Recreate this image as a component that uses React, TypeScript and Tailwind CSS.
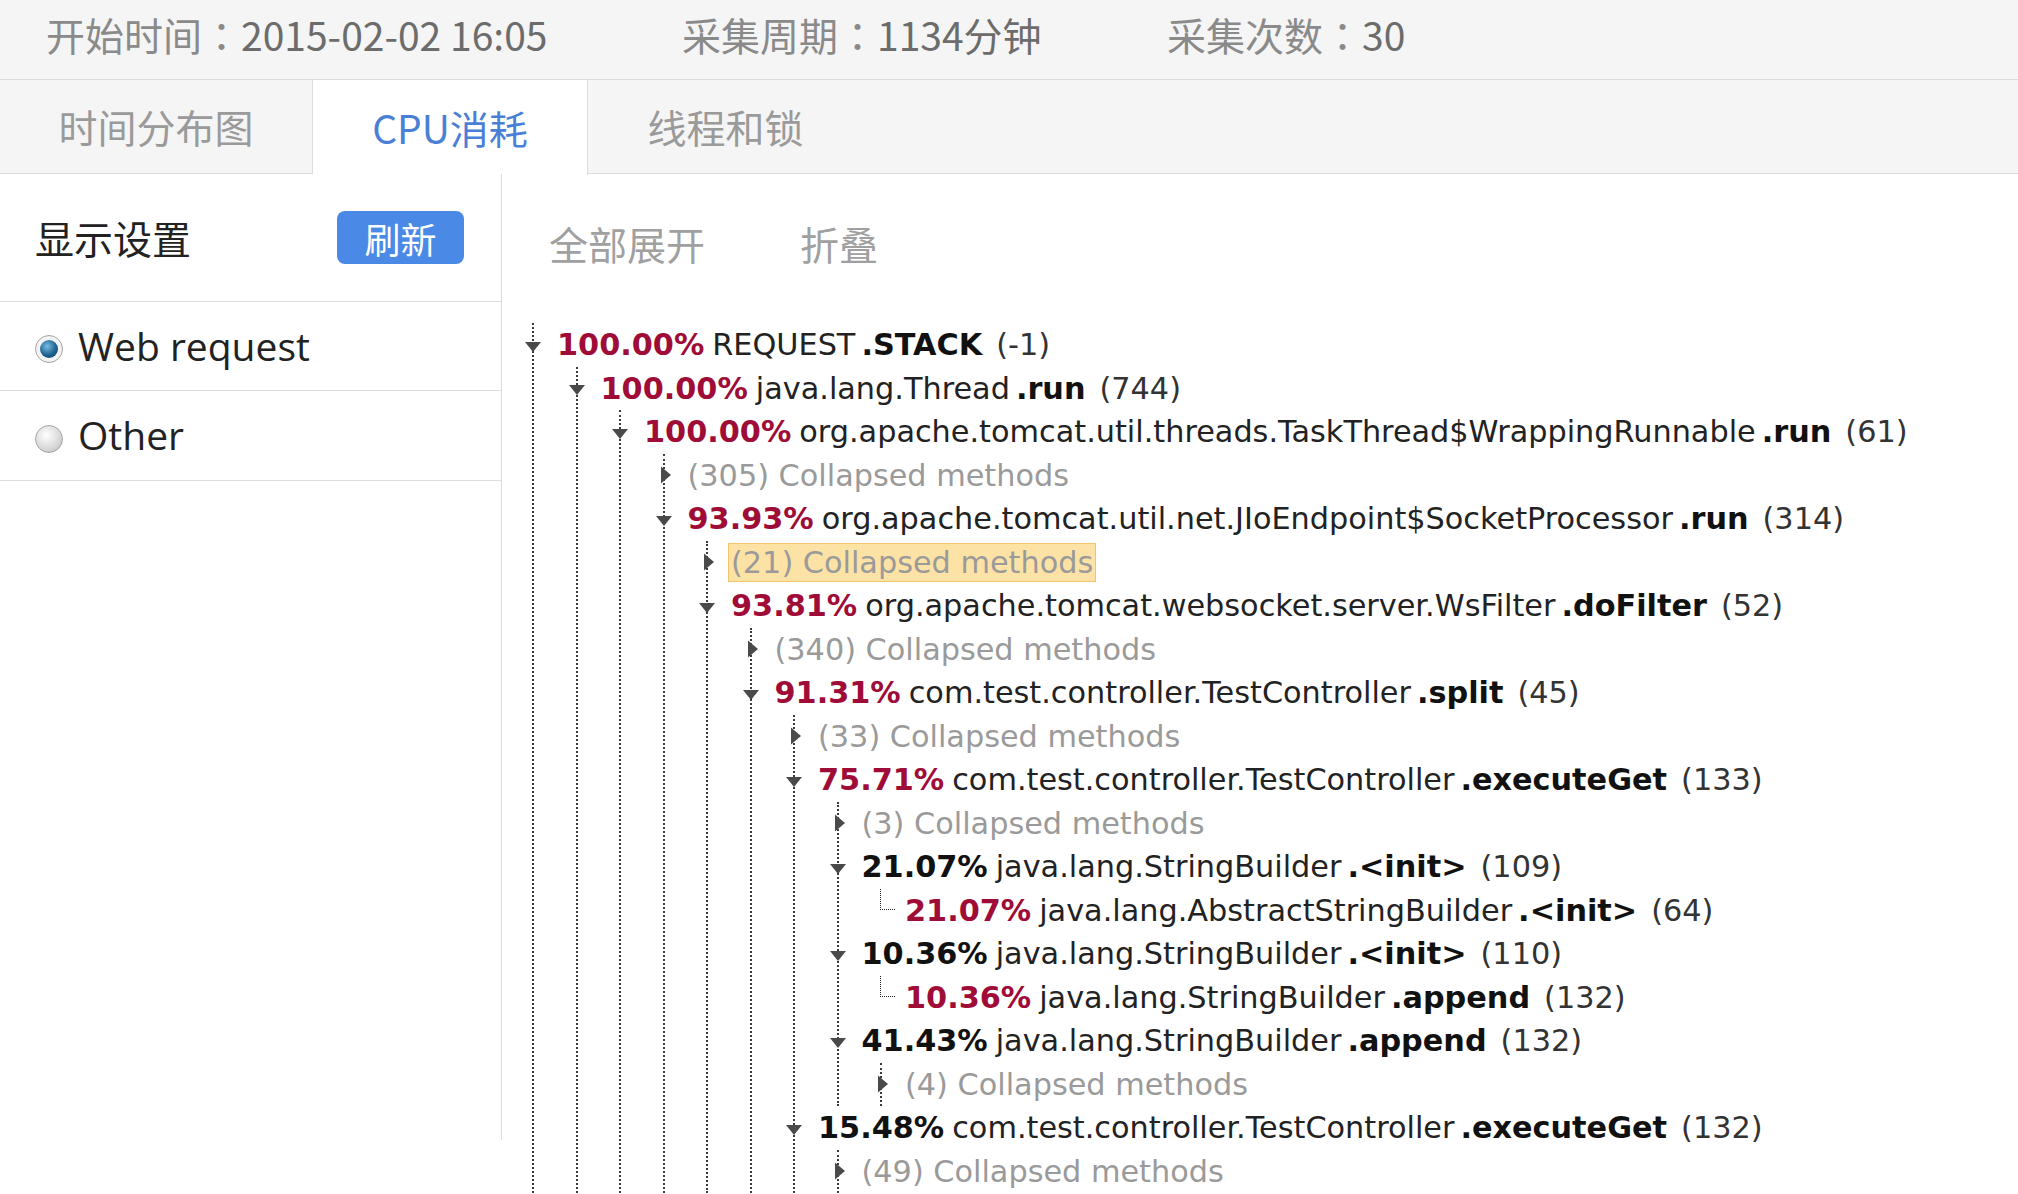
import React from 'react';

type Node = {
  pct?: string;
  red?: boolean;
  cls?: string;
  method?: string;
  count?: string;
  collapsed?: number;
  highlight?: boolean;
  children?: Node[];
};

const stack: Node[] = [
  {
    pct: '100.00%', red: true, cls: 'REQUEST', method: 'STACK', count: '(-1)', children: [
      {
        pct: '100.00%', red: true, cls: 'java.lang.Thread', method: 'run', count: '(744)', children: [
          {
            pct: '100.00%', red: true, cls: 'org.apache.tomcat.util.threads.TaskThread$WrappingRunnable', method: 'run', count: '(61)', children: [
              { collapsed: 305 },
              {
                pct: '93.93%', red: true, cls: 'org.apache.tomcat.util.net.JIoEndpoint$SocketProcessor', method: 'run', count: '(314)', children: [
                  { collapsed: 21, highlight: true },
                  {
                    pct: '93.81%', red: true, cls: 'org.apache.tomcat.websocket.server.WsFilter', method: 'doFilter', count: '(52)', children: [
                      { collapsed: 340 },
                      {
                        pct: '91.31%', red: true, cls: 'com.test.controller.TestController', method: 'split', count: '(45)', children: [
                          { collapsed: 33 },
                          {
                            pct: '75.71%', red: true, cls: 'com.test.controller.TestController', method: 'executeGet', count: '(133)', children: [
                              { collapsed: 3 },
                              {
                                pct: '21.07%', cls: 'java.lang.StringBuilder', method: '<init>', count: '(109)', children: [
                                  { pct: '21.07%', red: true, cls: 'java.lang.AbstractStringBuilder', method: '<init>', count: '(64)' },
                                ],
                              },
                              {
                                pct: '10.36%', cls: 'java.lang.StringBuilder', method: '<init>', count: '(110)', children: [
                                  { pct: '10.36%', red: true, cls: 'java.lang.StringBuilder', method: 'append', count: '(132)' },
                                ],
                              },
                              {
                                pct: '41.43%', cls: 'java.lang.StringBuilder', method: 'append', count: '(132)', children: [
                                  { collapsed: 4 },
                                ],
                              },
                            ],
                          },
                          {
                            pct: '15.48%', cls: 'com.test.controller.TestController', method: 'executeGet', count: '(132)', children: [
                              { collapsed: 49 },
                            ],
                          },
                        ],
                      },
                    ],
                  },
                ],
              },
            ],
          },
        ],
      },
    ],
  },
];

const DownArrow = () => (
  <svg width="28" height="22" viewBox="0 0 28 22">
    <path d="M6 8 L22 8 L14 18 Z" fill="#4a4a4a" />
  </svg>
);

const RightArrow = () => (
  <svg width="28" height="22" viewBox="0 0 28 22">
    <path d="M11 2.5 L21 11 L11 19.5 Z" fill="#4a4a4a" />
  </svg>
);

const isLeaf = (n: Node) => !n.children && n.collapsed === undefined;

const Row = ({ node, leaf }: { node: Node; leaf?: boolean }) => {
  if (node.collapsed !== undefined) {
    return (
      <div className="h-[43.5px] flex items-center -ml-[15px]">
        <span className="w-[28px] h-full shrink-0 flex items-center justify-center">
          <RightArrow />
        </span>
        {node.highlight ? (
          <span className="ml-[7px] h-[39px] flex items-center px-[2px] bg-[#fde2a6] border border-[#f1c46c] text-[#9a9a9a] whitespace-nowrap">
            ({node.collapsed}) Collapsed methods
          </span>
        ) : (
          <span className="ml-[10px] text-[#9a9a9a] whitespace-nowrap">({node.collapsed}) Collapsed methods</span>
        )}
      </div>
    );
  }
  return (
    <div className="h-[43.5px] flex items-center -ml-[15px] whitespace-nowrap">
      {leaf ? (
        <span className="w-[28px] h-full shrink-0 flex">
          <span className="ml-[13px] h-1/2 w-[21px] border-l border-b border-dotted border-[#222]" />
        </span>
      ) : (
        <span className="w-[28px] h-full shrink-0 flex items-center justify-center">
          <DownArrow />
        </span>
      )}
      <span className={`ml-[10px] font-bold ${node.red ? 'text-[#a00c38]' : 'text-[#111]'}`}>{node.pct}</span>
      <span className="ml-[8px] text-[#222]">{node.cls}</span>
      <span className="ml-[6px] font-bold text-[#111]">.{node.method}</span>
      <span className="ml-[14px] text-[#333]">{node.count}</span>
    </div>
  );
};

const Block = ({ nodes, root }: { nodes: Node[]; root?: boolean }) => {
  const leafOnly = nodes.every(isLeaf);
  return (
    <div
      className={`${root ? 'ml-[30px]' : 'ml-[41.5px]'} border-l-2 border-dotted ${leafOnly ? 'border-transparent' : 'border-[#3a3a3a]'}`}
    >
      {nodes.map((n, i) => (
        <React.Fragment key={i}>
          <Row node={n} leaf={leafOnly} />
          {n.children && <Block nodes={n.children} />}
        </React.Fragment>
      ))}
    </div>
  );
};

const Colon = () => <span className="font-['Noto_Sans_CJK_TC',sans-serif]">：</span>;

export default function App() {
  return (
    <div className="w-[2018px] h-[1194px] bg-white overflow-hidden font-['Noto_Sans_CJK_SC',sans-serif]">
      {/* Summary bar */}
      <div className="h-[80px] bg-[#f5f5f5] border-b border-[#dcdcdc] flex items-center pb-[10px] pl-[46px] text-[39px] whitespace-nowrap">
        <span className="w-[636px] shrink-0 text-[#8a8a8a]">
          开始时间<Colon />
          <span className="text-[#6c6c6c]">2015-02-02 16:05</span>
        </span>
        <span className="w-[485px] shrink-0 text-[#8a8a8a]">
          采集周期<Colon />
          <span className="text-[#6c6c6c]">1134分钟</span>
        </span>
        <span className="text-[#8a8a8a]">
          采集次数<Colon />
          <span className="text-[#6c6c6c]">30</span>
        </span>
      </div>

      {/* Tabs */}
      <div className="h-[94px] bg-[#f5f5f5] border-b border-[#dcdcdc] flex text-[39px]">
        <div className="w-[313px] border-r border-[#dcdcdc] flex items-center justify-center text-[#9a9a9a]">时间分布图</div>
        <div className="w-[275px] h-[95px] bg-white border-r border-[#dcdcdc] flex items-center justify-center text-[#4a7fd6]">CPU消耗</div>
        <div className="w-[275px] flex items-center justify-center text-[#9a9a9a]">线程和锁</div>
      </div>

      <div className="flex">
        {/* Sidebar */}
        <div className="w-[502px] h-[966px] shrink-0 border-r border-[#dcdcdc]">
          <div className="h-[128px] border-b border-[#dcdcdc] flex items-center justify-between pl-[35px] pr-[37px]">
            <span className="text-[39px] text-[#222]">显示设置</span>
            <button className="w-[127px] h-[53px] rounded-[8px] bg-[#4a89e6] text-white text-[36px] flex items-center justify-center">
              刷新
            </button>
          </div>
          <div className="h-[89px] border-b border-[#dcdcdc] flex items-center pl-[35px] font-['Open_Sans',sans-serif] text-[39px] text-[#222]">
            <span className="w-[28px] h-[28px] rounded-full border border-[#a5a5a5] bg-[#f3f3f3] flex items-center justify-center mt-[6px]">
              <span className="w-[18px] h-[18px] rounded-full bg-[radial-gradient(circle_at_40%_35%,#78bde2,#1d6390_55%,#0f3f60)]" />
            </span>
            <span className="ml-[15px]">Web request</span>
          </div>
          <div className="h-[90px] border-b border-[#dcdcdc] flex items-center pl-[35px] font-['Open_Sans',sans-serif] text-[39px] text-[#222]">
            <span className="w-[28px] h-[28px] rounded-full border border-[#a5a5a5] bg-[radial-gradient(circle_at_40%_35%,#ffffff,#d4d4d4_65%,#b8b8b8)] mt-[6px]" />
            <span className="ml-[15px]">Other</span>
          </div>
        </div>

        {/* Stack tree */}
        <div className="flex-1 min-w-0">
          <div className="h-[138px] flex items-center pl-[47px] text-[39px] text-[#a0a0a0]">
            <span>全部展开</span>
            <span className="ml-[95px]">折叠</span>
          </div>
          <div className="mt-[11px] font-['DejaVu_Sans',sans-serif] text-[30.3px]">
            <Block nodes={stack} root />
          </div>
        </div>
      </div>
    </div>
  );
}
